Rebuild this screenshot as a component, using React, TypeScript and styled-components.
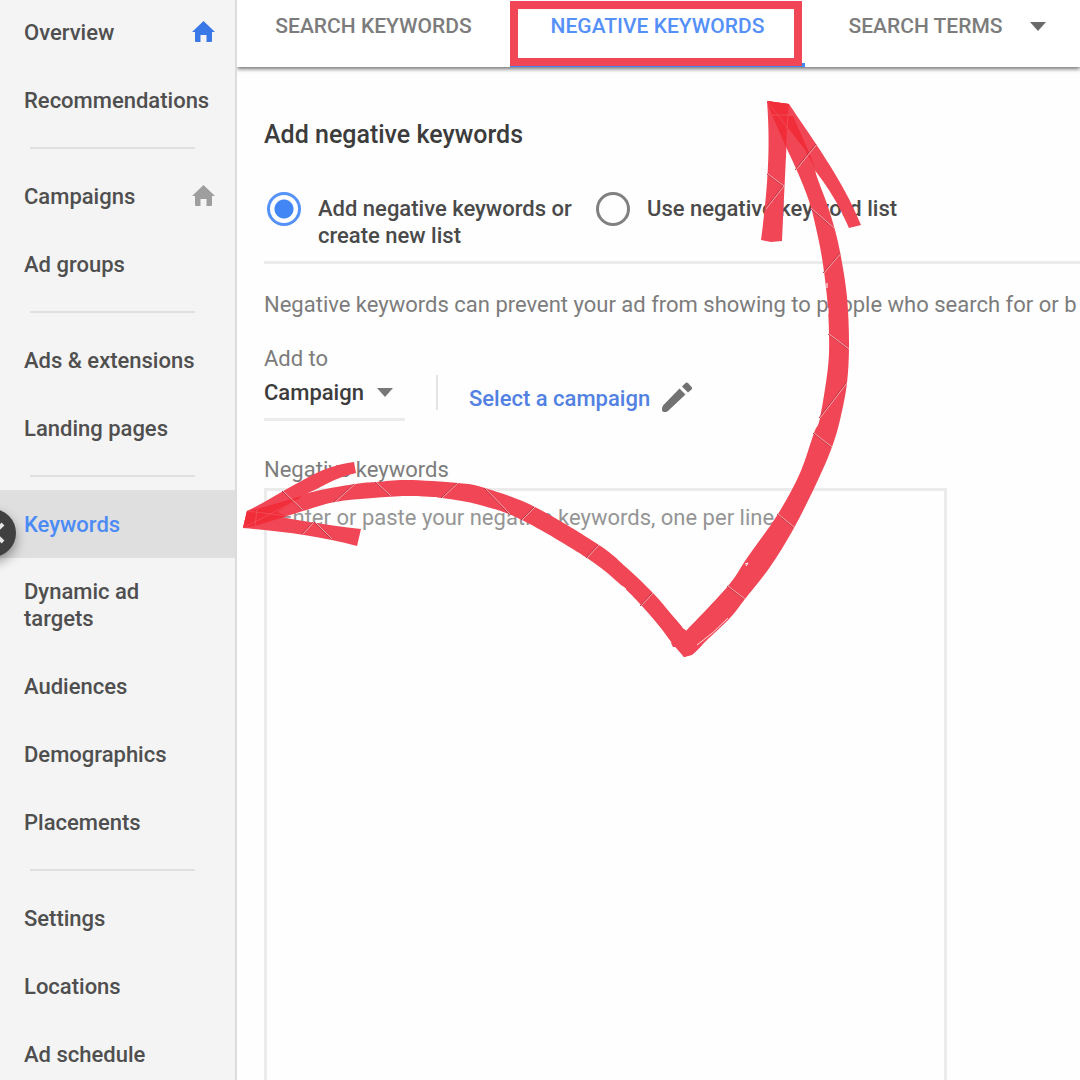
import React, { useState } from "react";
import styled, { createGlobalStyle, css } from "styled-components";

const red = "#f14656";
const blue = "#4285f4";

const GlobalStyle = createGlobalStyle`
  *, *::before, *::after { box-sizing: border-box; }
  body {
    margin: 0;
    overflow: hidden;
    background: #fefefe;
    font-family: Roboto, "Liberation Sans", sans-serif;
    font-size: 22px;
    line-height: 27px;
    color: #3c3c3c;
  }
`;

const Page = styled.div`
  position: relative;
  display: flex;
  height: 100vh;
  overflow: hidden;
`;

const Sidebar = styled.nav`
  flex: 0 0 237px;
  overflow: hidden;
  background: #f4f4f4;
  border-right: 2px solid #dcdcdc;
`;

const NavList = styled.ul`
  margin: -2px 0 0;
  padding: 0;
  list-style: none;
`;

const NavLink = styled.a<{ $active?: boolean }>`
  display: flex;
  align-items: center;
  justify-content: space-between;
  min-height: 68px;
  padding: 20px 20px 20px 24px;
  font-weight: 500;
  text-decoration: none;
  color: #4f4f4f;
  ${(p) => p.$active && css`
    color: #4b8bf6;
    background: #dfdfdf;
  `}
`;

const NavText = styled.span<{ $wrap?: boolean }>`
  white-space: nowrap;
  ${(p) => p.$wrap && css`
    width: 130px;
    white-space: normal;
  `}
`;

const NavRule = styled.li`
  height: 28px;
  padding: 13px 40px 0 30px;
  &::before {
    content: "";
    display: block;
    height: 2px;
    background: #e0e0e0;
  }
`;

const CollapseButton = styled.button`
  position: absolute;
  top: 509px;
  left: -32px;
  width: 48px;
  height: 48px;
  padding: 0;
  border: 0;
  border-radius: 50%;
  background: #404040;
  box-shadow: 0 5px 12px rgba(0, 0, 0, 0.4);
  svg { display: block; }
`;

const Main = styled.main`
  flex: 1;
  min-width: 0;
  display: flex;
  flex-direction: column;
  overflow: hidden;
`;

const TabBar = styled.div`
  flex: none;
  display: flex;
  height: 67px;
  background: #fff;
  box-shadow: 0 2px 4px rgba(0, 0, 0, 0.55);
`;

const Tab = styled.button<{ $active?: boolean; $width: number }>`
  position: relative;
  flex: 0 0 ${(p) => p.$width}px;
  display: flex;
  justify-content: center;
  gap: 27px;
  padding: 0;
  border: 0;
  background: none;
  font: 500 21px/52px Roboto, "Liberation Sans", sans-serif;
  white-space: nowrap;
  color: #7c7c7c;
  ${(p) => p.$active && css`
    color: #5590f8;
    box-shadow: inset 0 -4px ${blue};
  `}
  svg { margin-top: 22px; }
`;

const Highlight = styled.span`
  position: absolute;
  inset: 1px 3px 1px 0;
  border: 8px solid ${red};
`;

const Content = styled.form`
  flex: 1;
  display: flex;
  flex-direction: column;
  padding: 50px 0 0 27px;
`;

const Title = styled.h1`
  margin: 0 0 42px;
  font-size: 25px;
  line-height: 36px;
  font-weight: 500;
  color: #3c3c3c;
`;

const Choices = styled.div`
  display: flex;
  align-items: flex-start;
  height: 69px;
  border-bottom: 3px solid #ebebeb;
`;

const Choice = styled.label<{ $width: number }>`
  flex: 0 0 ${(p) => p.$width}px;
  display: flex;
  gap: 17px;
  padding-left: 3px;
  font-weight: 500;
  color: #4a4a4a;
`;

const Radio = styled.input`
  appearance: none;
  flex: none;
  width: 34px;
  height: 34px;
  margin: -3px 0 0;
  border: 3px solid #808080;
  border-radius: 50%;
  &:checked {
    border-color: #5592f8;
    background: radial-gradient(circle, ${blue} 9px, transparent 10px);
  }
`;

const Help = styled.p`
  margin: 27px 0;
  overflow: hidden;
  white-space: nowrap;
  color: #7c7c7c;
`;

const TargetRow = styled.div`
  display: flex;
  align-items: flex-end;
  margin-bottom: 35px;
`;

const Field = styled.div`
  position: relative;
  display: flex;
  flex-direction: column;
  width: 141px;
  svg {
    position: absolute;
    right: 12px;
    bottom: 24px;
    pointer-events: none;
  }
`;

const FieldLabel = styled.label`
  color: #7c7c7c;
`;

const Select = styled.select`
  appearance: none;
  width: 100%;
  height: 49px;
  padding: 0 0 5px;
  border: 0;
  border-bottom: 3px solid #ebebeb;
  background: none;
  font: 500 22px/27px Roboto, "Liberation Sans", sans-serif;
  color: #3c3c3c;
`;

const Separator = styled.span`
  width: 2px;
  height: 35px;
  margin: 0 31px 11px;
  background: #e4e4e4;
`;

const PickLink = styled.a`
  display: flex;
  align-items: center;
  gap: 12px;
  padding-bottom: 6px;
  font-weight: 500;
  text-decoration: none;
  color: #5281e2;
`;

const KeywordBox = styled.textarea`
  flex: 1;
  width: 683px;
  max-width: 100%;
  min-height: 620px;
  margin-top: 5px;
  padding: 13px;
  border: 3px solid #ebebeb;
  background: none;
  resize: none;
  overflow: hidden;
  font: 400 22px/27px Roboto, "Liberation Sans", sans-serif;
  &::placeholder { color: #959595; opacity: 1; }
`;

const Annotation = styled.svg`
  position: absolute;
  top: 0;
  left: 0;
  pointer-events: none;
`;

const HomeIcon = ({ color }: { color: string }) => (
  <svg width="23" height="25" viewBox="0 0 23 25" fill={color} aria-hidden="true">
    <path d="M11.500 1 23 12h-3v9q0 1-1 1h-4.500v-7h-6v7H4q-1 0-1-1v-9H0z" />
  </svg>
);

const Caret = ({ color }: { color: string }) => (
  <svg width="16" height="9" viewBox="0 0 16 9" fill={color} aria-hidden="true">
    <path d="M0 0h16L8 9z" />
  </svg>
);

const PencilIcon = () => (
  <svg width="32" height="34" viewBox="0 0 32 34" fill="#727272" aria-hidden="true">
    <path d="M1 24.500Q0 26 0 28v1q0 2 2 2h1q2 0 3.500-1.500L23.500 13.500l-6-6zM29.500 8.500c.8-.8.8-1.700 0-2.500L26 2c-.8-.8-1.700-.8-2.500 0l-3.500 3.500 6 6z" />
  </svg>
);

type NavItem = { label: string; home?: string; active?: boolean; wrap?: boolean } | null;

const navItems: NavItem[] = [
  { label: "Overview", home: "#3b78e7" },
  { label: "Recommendations" },
  null,
  { label: "Campaigns", home: "#9e9e9e" },
  { label: "Ad groups" },
  null,
  { label: "Ads & extensions" },
  { label: "Landing pages" },
  null,
  { label: "Keywords", active: true },
  { label: "Dynamic ad targets", wrap: true },
  { label: "Audiences" },
  { label: "Demographics" },
  { label: "Placements" },
  null,
  { label: "Settings" },
  { label: "Locations" },
  { label: "Ad schedule" },
];

type Point = [number, number];

// Catmull-Rom segments through every point of one edge of a brush stroke.
const curve = (pts: Point[]) =>
  pts.slice(1).map((p, i) => {
    const a = pts[i];
    const before = pts[i - 1] ?? a;
    const after = pts[i + 2] ?? p;
    const c1 = [a[0] + (p[0] - before[0]) / 6, a[1] + (p[1] - before[1]) / 6];
    const c2 = [p[0] - (after[0] - a[0]) / 6, p[1] - (after[1] - a[1]) / 6];
    return `C${c1} ${c2} ${p}`;
  }).join("");

const brush = (edgeA: Point[], edgeB: Point[]) =>
  `M${edgeA[0]}${curve(edgeA)}L${edgeB[0]}${curve(edgeB)}Z`;

const upShaft = brush(
  [[772, 115], [787, 149], [798, 173], [809, 201], [816, 228], [822, 258], [827, 297], [829, 333], [828, 367], [820, 418], [814, 433], [800, 473], [778, 514], [747, 558], [728, 586], [686, 631], [674, 643]],
  [[684, 657], [694, 653], [706, 641], [730, 618], [745, 599], [770, 567], [794, 528], [818, 480], [832, 447], [840, 420], [847, 383], [849, 343], [847, 297], [841, 257], [835, 230], [827, 204], [817, 177], [812, 160], [793, 116]],
);

const leftShaft = brush(
  [[257, 509], [308, 493], [355, 484], [377, 482], [407, 480], [458, 483], [485, 488], [535, 507], [599, 545], [627, 568], [653, 593], [672, 615], [686, 631]],
  [[684, 657], [672, 643], [660, 627], [641, 605], [621, 585], [587, 558], [522, 520], [480, 505], [442, 498], [407, 496], [373, 498], [335, 502], [303, 511], [255, 526]],
);

const strokes = [
  "M767 101C770 140 769 180 761 240L771 242 782 241C784 200 786 150 789 104Z",
  "M767 101 789 104C810 136 842 178 861 225L849 228C836 198 824 182 813 168Z",
  upShaft,
  leftShaft,
  "M247 511C272 499 298 481 323 470Q342 463 354 462L356 473 345 476C330 481 320 488 308 493L290 503 243 528Z",
  "M247 511C285 518 324 525 361 529L357 546C320 536 280 531 243 528Z",
  "M684 629 671 643 673 647 678 647 684 657 692 655 702 645Z",
];

const overlaps = [
  "M767 101 789 104 788 115 793 116 808 150 815 168 806 152 787 128 786 147 772 115Z",
  "M247 511 257 509 302 496 297 500 277 512 287 516 255 526 243 528Z",
];

const folds = [
  [768, 174, 784, 186], [784, 186, 766, 209], [817, 144, 796, 170], [811, 208, 834, 228],
  [841, 253, 824, 273], [829, 334, 849, 349], [847, 383, 820, 418], [814, 433, 832, 447],
  [778, 514, 794, 527], [728, 586, 745, 599], [653, 593, 641, 606], [599, 545, 587, 558],
  [535, 507, 522, 520], [485, 488, 510, 514], [458, 483, 442, 498], [376, 482, 391, 496],
  [355, 484, 335, 502], [283, 491, 303, 510], [314, 522, 303, 534], [315, 522, 332, 539],
];

const Arrows = () => (
  <Annotation width="1080" height="1080" viewBox="0 0 1080 1080" fill="none" aria-hidden="true">
    {strokes.map((d) => <path key={d} d={d} fill={red} />)}
    {overlaps.map((d) => <path key={d} d={d} fill="#f02d39" />)}
    <path d="M767 101 806 152M788 115 787 128M772 115H793M247 511 287 516M257 509 255 526M243 528 297 500" stroke="#f25a66" strokeWidth="0.6" />
    {folds.map(([x1, y1, x2, y2]) => (
      <g key={`${x1}-${y1}-${x2}`}>
        <path d={`M${x1 - 1} ${y1}L${x2 - 1} ${y2}`} stroke="#b8323f" strokeWidth="1" />
        <path d={`M${x1} ${y1}L${x2} ${y2}`} stroke="#f9a3aa" strokeWidth="1" />
      </g>
    ))}
    <path d="M667 608Q677 617 684 629M728 618Q714 633 697 645" stroke="#fff" strokeWidth="0.8" />
    <path d="M746 566l2-3m-3 1 3-1M622 586l4 3M401 496.500h8m4 0h6m11 1h7M827 283v5m1 20v6" stroke="#fff" strokeWidth="1" />
  </Annotation>
);

export default function App() {
  const [mode, setMode] = useState("new");
  return (
    <>
      <GlobalStyle />
      <Page>
        <Sidebar aria-label="Account sections">
          <NavList>
            {navItems.map((item, i) =>
              item ? (
                <li key={item.label}>
                  <NavLink href="#" $active={item.active} aria-current={item.active ? "page" : undefined}>
                    <NavText $wrap={item.wrap}>{item.label}</NavText>
                    {item.home && <HomeIcon color={item.home} />}
                  </NavLink>
                </li>
              ) : (
                <NavRule key={i} role="separator" />
              )
            )}
          </NavList>
        </Sidebar>
        <Main>
          <TabBar role="tablist">
            <Tab type="button" role="tab" $width={273}>SEARCH KEYWORDS</Tab>
            <Tab type="button" role="tab" aria-selected $active $width={295}>
              NEGATIVE KEYWORDS
              <Highlight />
            </Tab>
            <Tab type="button" role="tab" $width={284}>
              SEARCH TERMS
              <Caret color="#6a6a6a" />
            </Tab>
          </TabBar>
          <Content>
            <Title>Add negative keywords</Title>
            <Choices>
              <Choice $width={329}>
                <Radio type="radio" name="mode" checked={mode === "new"} onChange={() => setMode("new")} />
                <span>Add negative keywords or<br />create new list</span>
              </Choice>
              <Choice $width={329}>
                <Radio type="radio" name="mode" checked={mode === "list"} onChange={() => setMode("list")} />
                <span>Use negative keyword list</span>
              </Choice>
            </Choices>
            <Help>Negative keywords can prevent your ad from showing to people who search for or b</Help>
            <TargetRow>
              <Field>
                <FieldLabel htmlFor="level">Add to</FieldLabel>
                <Select id="level" defaultValue="Campaign">
                  <option>Campaign</option>
                  <option>Ad group</option>
                </Select>
                <Caret color="#777" />
              </Field>
              <Separator />
              <PickLink href="#">Select a campaign<PencilIcon /></PickLink>
            </TargetRow>
            <FieldLabel htmlFor="keywords">Negative keywords</FieldLabel>
            <KeywordBox id="keywords" placeholder="Enter or paste your negative keywords, one per line" />
          </Content>
        </Main>
        <CollapseButton type="button" aria-label="Collapse navigation">
          <svg width="48" height="48" viewBox="0 0 48 48" fill="none" stroke="#e6e6e6" strokeWidth="4" aria-hidden="true">
            <path d="M35 15 26 24l9 9" />
          </svg>
        </CollapseButton>
        <Arrows />
      </Page>
    </>
  );
}
